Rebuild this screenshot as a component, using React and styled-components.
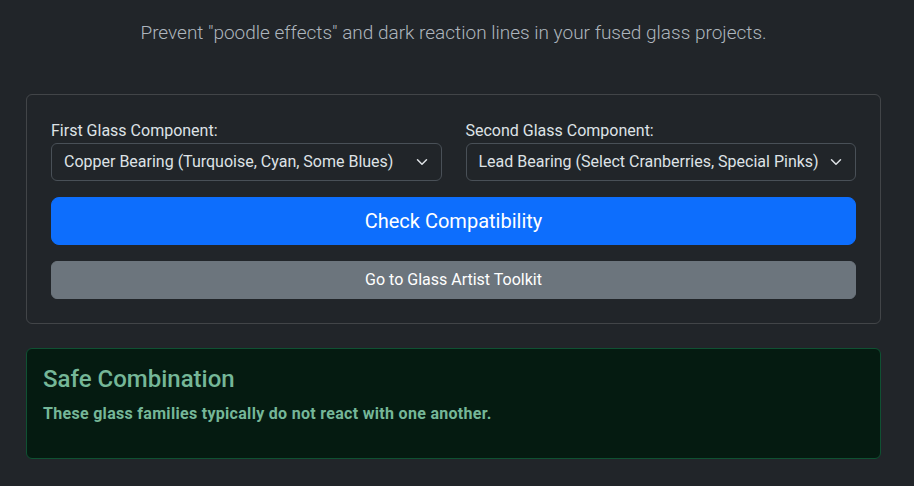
import React, { useState } from 'react'
import styled, { createGlobalStyle } from 'styled-components'

const GlobalStyle = createGlobalStyle`
    html, body {
        margin: 0;
        background-color: #212529;
        color: #dee2e6;
        font-family: "Segoe UI", Roboto, "Noto Sans", "Liberation Sans", sans-serif;
        font-size: 16px;
        line-height: 1.5;
    }
    * { box-sizing: border-box; }
`

const Page = styled.main`
    padding: 18px 33px 24px 26px;
`

const Lead = styled.p`
    margin: 0 0 46px;
    text-align: center;
    font-size: 19px;
    font-weight: 300;
    line-height: 30px;
    color: #adb5bd;
`

const Card = styled.section`
    border: 1px solid rgba(255, 255, 255, 0.15);
    border-radius: 6px;
    padding: 24px;
`

const Fields = styled.div`
    display: grid;
    grid-template-columns: 1fr 1fr;
    column-gap: 24px;
`

const Label = styled.label`
    display: block;
    color: #dee2e6;
`

const SelectWrap = styled.div`
    position: relative;
    svg {
        position: absolute;
        right: 12px;
        top: 50%;
        transform: translateY(-50%);
        pointer-events: none;
    }
`

const Select = styled.select`
    display: block;
    width: 100%;
    appearance: none;
    padding: 6px 36px 6px 12px;
    font: inherit;
    line-height: 1.5;
    color: #dee2e6;
    background-color: #212529;
    border: 1px solid #495057;
    border-radius: 6px;
    outline: none;
`

const Button = styled.button`
    display: block;
    width: 100%;
    margin-top: 16px;
    border: 1px solid ${p => p.$bg};
    background-color: ${p => p.$bg};
    color: #fff;
    font-family: inherit;
    font-size: ${p => (p.$large ? '20px' : '16px')};
    line-height: 1.5;
    padding: ${p => (p.$large ? '8px 16px' : '6px 12px')};
    border-radius: ${p => (p.$large ? '8px' : '6px')};
    cursor: pointer;
`

const Alert = styled.div`
    margin-top: 24px;
    padding: 16px;
    border: 1px solid #0f5132;
    border-radius: 6px;
    background-color: #051b11;
    color: #75b798;
    h4 {
        margin: 0 0 8px;
        font-size: 24px;
        font-weight: 500;
        line-height: 1.2;
    }
    p {
        margin: 0 0 16px;
        font-weight: 700;
        letter-spacing: 0.3px;
    }
`

const glassTypes = [
    'Copper Bearing (Turquoise, Cyan, Some Blues)',
    'Sulfur/Selenium Bearing (Yellows, Oranges, Reds)',
    'Lead Bearing (Select Cranberries, Special Pinks)',
]

const Chevron = () => (
    <svg width="16" height="12" viewBox="0 0 16 16" fill="none">
        <path d="m2 5 6 6 6-6" stroke="#dee2e6" strokeWidth="2" strokeLinecap="round" strokeLinejoin="round" />
    </svg>
)

function GlassSelect({ id, label, value, onChange }) {
    return (
        <div>
            <Label htmlFor={id}>{label}</Label>
            <SelectWrap>
                <Select id={id} value={value} onChange={e => onChange(e.target.value)}>
                    {glassTypes.map(o => (
                        <option key={o}>{o}</option>
                    ))}
                </Select>
                <Chevron />
            </SelectWrap>
        </div>
    )
}

export default function App() {
    const [first, setFirst] = useState(glassTypes[0])
    const [second, setSecond] = useState(glassTypes[2])

    return (
        <Page>
            <GlobalStyle />
            <Lead>Prevent "poodle effects" and dark reaction lines in your fused glass projects.</Lead>
            <Card>
                <Fields>
                    <GlassSelect id="first" label="First Glass Component:" value={first} onChange={setFirst} />
                    <GlassSelect id="second" label="Second Glass Component:" value={second} onChange={setSecond} />
                </Fields>
                <Button $bg="#0d6efd" $large>Check Compatibility</Button>
                <Button $bg="#6c757d">Go to Glass Artist Toolkit</Button>
            </Card>
            <Alert>
                <h4>Safe Combination</h4>
                <p>These glass families typically do not react with one another.</p>
            </Alert>
        </Page>
    )
}
